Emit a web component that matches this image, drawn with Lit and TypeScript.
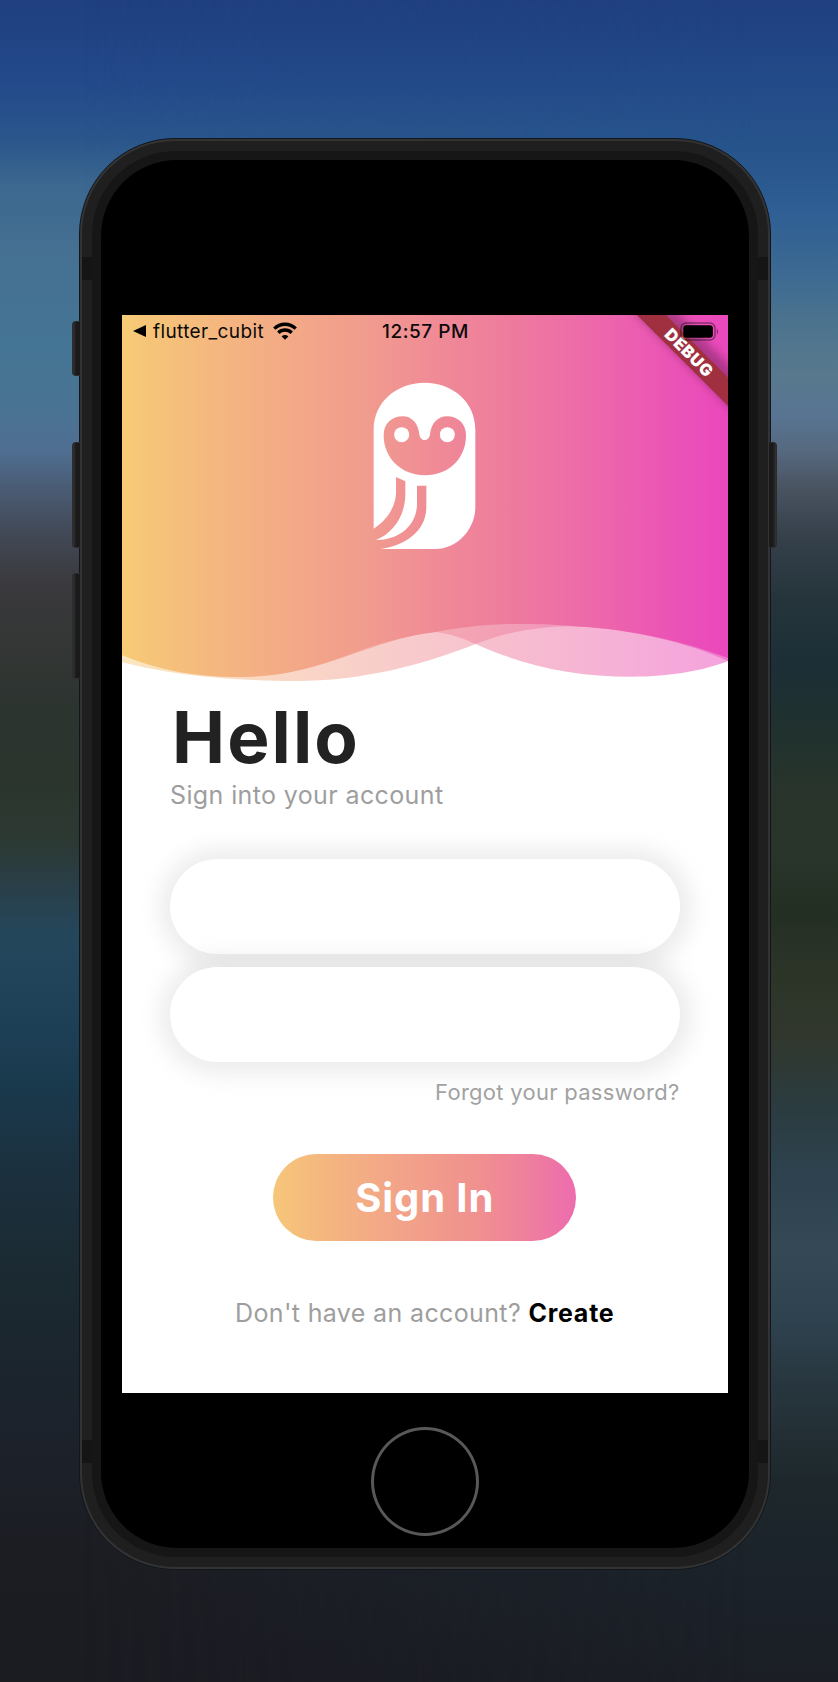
import { LitElement, html, css, svg } from "lit";
import { customElement } from "lit/decorators.js";

const HERO_STOPS = svg`
  <stop offset="0" stop-color="#f7cd76"/>
  <stop offset="0.04" stop-color="#f6c578"/>
  <stop offset="0.2" stop-color="#f4b282"/>
  <stop offset="0.4" stop-color="#f19c8e"/>
  <stop offset="0.5" stop-color="#f08d95"/>
  <stop offset="0.65" stop-color="#ee7a9e"/>
  <stop offset="0.8" stop-color="#ed65ac"/>
  <stop offset="0.9" stop-color="#eb54b5"/>
  <stop offset="1" stop-color="#ea48bc"/>`;

/** Gradient header with the two translucent waves along its lower edge. */
@customElement("wave-backdrop")
export class WaveBackdrop extends LitElement {
  static styles = css`
    :host { display: block; }
    svg { display: block; }
  `;
  render() {
    return html`<svg width="606" height="372" viewBox="0 0 606 372">
      <defs>
        <linearGradient id="g" gradientUnits="userSpaceOnUse" x1="0" y1="0" x2="606" y2="0">${HERO_STOPS}</linearGradient>
      </defs>
      <path fill="url(#g)" opacity="0.48" d="M0 0V347C50 361 120 366 173 366C240 366 300 350 353.6 329C390 315 420 311.500 454 311C510 314 566 328 606 346V0Z"/>
      <path fill="url(#g)" opacity="0.5" d="M0 0V340C35 355 75 362 117 362C165 362 200 350 240 336C265 328 290 318 314 317C330 319 342 324 353.600 329C400 350 450 361.700 510 361.700C550 361.700 583 355 606 346V0Z"/>
      <path fill="url(#g)" d="M0 0V340C35 355 75 362 117 362C165 362 200 350 240 335C265 326 290 320 314 317C350 310 380 308.500 410 309C427 309.500 440 310 454 311.500C510 314 566 328 606 343V0Z"/>
    </svg>`;
  }
}

@customElement("owl-logo")
export class OwlLogo extends LitElement {
  static styles = css`
    :host { display: block; }
    svg { display: block; }
  `;
  render() {
    return html`<svg width="103" height="168" viewBox="98 65 309 504">
      <path fill="#fff" fill-rule="evenodd" d="M100 505V208C100 126 168 67 253 67S405 126 405 208V440C405 508 350 566 285 566H120C195 556 258 512 258 440V376H230V430C230 500 170 540 107 539C155 520 195 470 195 400V363L167 350V400C165 440 140 480 100 505Z
      M130 225C130 190 155 168 187 168C215 168 234 190 237 222C239 245 267 245 269 222C272 190 292 168 320 168C352 168 377 190 377 225C377 295 325 345 254 345C185 345 130 295 130 225Z"/>
      <circle cx="184" cy="223" r="22.500" fill="#fff"/>
      <circle cx="321" cy="223" r="22.500" fill="#fff"/>
    </svg>`;
  }
}

@customElement("debug-banner")
export class DebugBanner extends LitElement {
  static styles = css`
    :host { display: block; }
    svg { display: block; overflow: hidden; }
    .label { font: 900 16.500px Inter, sans-serif; fill: #fff; }
  `;
  render() {
    return html`<svg width="106" height="106" viewBox="0 0 106 106">
      <defs><filter id="b" x="-20%" y="-20%" width="140%" height="140%"><feGaussianBlur stdDeviation="4"/></filter></defs>
      <path d="M8 -7H51L113 56V98Z" fill="#000" opacity="0.26" filter="url(#b)"/>
      <path d="M15 0H44L106 62.500V91Z" fill="#a03040"/>
      <text class="label" transform="translate(67 37.500) rotate(45)" text-anchor="middle" dominant-baseline="central" textLength="60">DEBUG</text>
    </svg>`;
  }
}

@customElement("status-bar")
export class StatusBar extends LitElement {
  static styles = css`
    :host { box-sizing: border-box; display: grid; grid-template-columns: 1fr auto 1fr; align-items: center; height: 32px; padding: 0 9px 0 11px; font: 400 19px Inter, sans-serif; color: #0c0a08; }
    .back { display: flex; align-items: center; }
    .app { margin: 0 9px 0 7px; letter-spacing: 0.38px; }
    .time { font-weight: 500; letter-spacing: 0.55px; margin-right: 1px; }
    .battery { justify-self: end; }
    svg { display: block; }
  `;
  render() {
    return html`
      <div class="back">
        <svg width="13" height="12" viewBox="0 0 13 12"><path d="M0 6L13 0V12Z" fill="#000"/></svg>
        <span class="app">flutter_cubit</span>
        <svg width="24" height="18" viewBox="0 0 24 18" fill="none" stroke="#000" stroke-width="3.400">
          <path d="M1.300 6.600A15.400 15.400 0 0 1 22.700 6.600"/>
          <path d="M5.300 10.700A9.600 9.600 0 0 1 18.700 10.700"/>
          <path d="M12 17.800L8.600 14.400A4.900 4.900 0 0 1 15.400 14.400Z" fill="#000" stroke="none"/>
        </svg>
      </div>
      <span class="time">12:57 PM</span>
      <svg class="battery" width="39" height="19" viewBox="0 0 39 19">
        <rect x="1" y="1" width="34" height="17" rx="5" fill="none" stroke="#000" stroke-opacity="0.4" stroke-width="1.500"/>
        <rect x="3.300" y="3.300" width="29.600" height="12.400" rx="3" fill="#000"/>
        <path d="M36.800 6.500Q39 9.500 36.800 12.500Z" fill="#000" fill-opacity="0.5"/>
      </svg>`;
  }
}

@customElement("sign-in-screen")
export class SignInScreen extends LitElement {
  static styles = css`
    :host { display: flex; flex-direction: column; width: 606px; height: 1078px; background: #fff; font-family: Inter, sans-serif; position: relative; overflow: hidden; }
    .hero { position: relative; height: 372px; flex: none; }
    .backdrop { position: absolute; inset: 0; }
    .banner { position: absolute; top: 0; right: 0; }
    .status { position: relative; }
    .logo { position: relative; width: 103px; margin: 35px auto 0 250.500px; }
    .content { display: flex; flex-direction: column; padding: 0 48.500px 0 48px; }
    h1 { margin: 10px 0 0 2px; font-size: 71px; line-height: 80px; font-weight: 700; color: #222; letter-spacing: 2.100px; }
    .sub { font-size: 25px; line-height: 30px; margin-top: 3px; color: #9e9e9e; letter-spacing: 0.38px; }
    .fields { display: flex; flex-direction: column; gap: 13px; margin-top: 49px; }
    .field { height: 95px; box-sizing: border-box; width: 100%; border: 0; outline: 0; border-radius: 48px; background: #fff; padding: 0 30px; box-shadow: 1px 1px 22px 11px rgba(158, 158, 158, 0.2); font: inherit; }
    .forgot { align-self: flex-end; margin-top: 17px; font-size: 22px; line-height: 26px; color: #a2a2a2; letter-spacing: 0.28px; }
    .submit { align-self: center; margin-top: 49px; width: 303px; height: 87px; padding: 0; border: 0; border-radius: 43.500px; font: 700 40px Inter, sans-serif; letter-spacing: 0.9px; color: #fff;
      background: linear-gradient(90deg, #f6c679 0%, #f4b480 20%, #f2a389 42%, #f0908f 68%, #ee7d9f 86%, #ed6cae 100%); }
    .create { align-self: center; margin-top: 56px; font-size: 25px; line-height: 32px; color: #9e9e9e; white-space: pre; letter-spacing: 0.36px; }
    .create b { font-weight: 700; color: #000; letter-spacing: 0.75px; }
  `;
  render() {
    return html`
      <header class="hero">
        <wave-backdrop class="backdrop"></wave-backdrop>
        <debug-banner class="banner"></debug-banner>
        <status-bar class="status"></status-bar>
        <owl-logo class="logo"></owl-logo>
      </header>
      <main class="content">
        <h1>Hello</h1>
        <div class="sub">Sign into your account</div>
        <div class="fields">
          <input class="field" type="text" aria-label="Email">
          <input class="field" type="password" aria-label="Password">
        </div>
        <div class="forgot">Forgot your password?</div>
        <button class="submit">Sign In</button>
        <div class="create">Don't have an account? <b>Create</b></div>
      </main>`;
  }
}

@customElement("app-root")
export class AppRoot extends LitElement {
  static styles = css`
    :host { display: grid; position: relative; box-sizing: border-box; width: 838px; height: 1682px; padding: 138px 67px 112px 79px; overflow: hidden;
      background: linear-gradient(180deg, #1f3f80 0, #23498a 80px, #2a568c 140px, #3c678f 185px, #457092 250px, #457594 350px, #4a7393 410px, #4f6f92 450px, #4a5d76 485px, #424855 535px, #3a393d 585px, #333634 650px, #2c3430 710px, #2b352d 780px, #2c3932 840px, #2a3f48 885px, #24475c 935px, #1f4259 1000px, #1a3a4e 1080px, #1b303e 1170px, #1b2930 1290px, #1c222b 1430px, #1c1d23 1550px, #1b1b22 1682px); }
    .right-sky { position: absolute; inset: 0;
      background: linear-gradient(180deg, #1f3f80 0, #234a88 80px, #27548b 150px, #2f5f94 215px, #3e6b92 280px, #4b738e 320px, #58798e 375px, #587492 415px, #56697f 450px, #49525f 490px, #343f4a 540px, #25343b 600px, #1c2f36 665px, #20312e 730px, #28342b 790px, #29342a 850px, #242f24 915px, #2c3428 970px, #31372c 1035px, #2b3b3e 1100px, #2d424e 1170px, #344856 1250px, #2e424f 1320px, #26343b 1400px, #1e282c 1480px, #1b222a 1580px, #1b1e25 1682px);
      -webkit-mask-image: linear-gradient(90deg, transparent 10%, #000 90%); mask-image: linear-gradient(90deg, transparent 10%, #000 90%); }
    .phone { position: relative; box-sizing: border-box; width: 692px; height: 1432px; border: 1px solid #10161c; border-radius: 96px; background: #333; padding: 2px; }
    .band-outer { box-sizing: border-box; height: 100%; border-radius: 93px; background: #1f1f1f; padding: 10px; }
    .band-inner { box-sizing: border-box; height: 100%; border-radius: 84px; background: #161616; padding: 9px; }
    .glass { box-sizing: border-box; height: 100%; border-radius: 76px; background: #000; padding: 155px 0 0 21px; }
    .home { box-sizing: border-box; width: 108px; height: 109px; margin: 34px 0 0 249px; border: 3px solid #585858; border-radius: 50%; }
    .key { position: absolute; box-sizing: border-box; width: 8px; background: linear-gradient(90deg, #333, #1a1a1a 45%); border: 1px solid #2c2c2c; border-right: 0; border-radius: 4px 0 0 4px; left: -8px; }
    .mute { top: 182px; height: 55px; }
    .up { top: 303px; height: 106px; }
    .down { top: 434px; height: 106px; }
    .power { left: auto; right: -7px; top: 303px; height: 106px; transform: scaleX(-1); }
    .seam { position: absolute; width: 10px; height: 22.500px; background: #151515; }
    .tl { left: 2px; top: 118px; }
    .tr { right: 2px; top: 118px; }
    .bl { left: 2px; top: 1301px; }
    .br { right: 2px; top: 1301px; }
  `;
  render() {
    return html`
      <div class="right-sky"></div>
      <div class="phone">
        <i class="key mute"></i><i class="key up"></i><i class="key down"></i><i class="key power"></i>
        <div class="band-outer"><div class="band-inner"><div class="glass">
          <sign-in-screen></sign-in-screen>
          <div class="home"></div>
        </div></div></div>
        <i class="seam tl"></i><i class="seam tr"></i><i class="seam bl"></i><i class="seam br"></i>
      </div>`;
  }
}
